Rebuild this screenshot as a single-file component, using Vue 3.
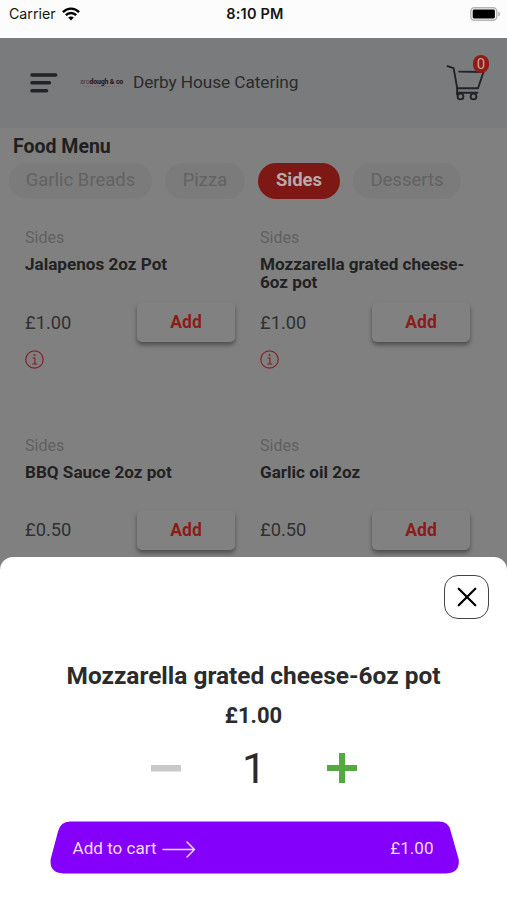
<script setup>
const categories = [
  { name: 'Garlic Breads', width: 143 },
  { name: 'Pizza', width: 80 },
  { name: 'Sides', width: 82, active: true },
  { name: 'Desserts', width: 108 },
]
const items = [
  { name: 'Jalapenos 2oz Pot', price: '£1.00', info: true },
  { name: 'Mozzarella grated cheese-6oz pot', price: '£1.00', info: true },
  { name: 'BBQ Sauce 2oz pot', price: '£0.50' },
  { name: 'Garlic oil 2oz', price: '£0.50' },
]
</script>

<template>
  <div class="screen">
    <div class="status">
      <div class="carrier">
        <span>Carrier</span>
        <svg width="18" height="14" viewBox="0 0 18 14" fill="none" stroke="#000" stroke-width="2.4">
          <path d="M.9 5.1C5.6.4 12.4.4 17.1 5.1" />
          <path d="M3.8 8.2c3-2.9 7.4-2.9 10.4 0" />
          <path d="M6.2 10.6c1.6-1.6 4-1.6 5.6 0L9 13.6z" fill="#000" stroke="none" />
        </svg>
      </div>
      <span class="time">8:10 PM</span>
      <svg class="battery" width="31" height="14" viewBox="0 0 31 14">
        <rect x=".8" y=".8" width="26" height="12.4" rx="3.6" fill="#fafafa" stroke="#b5b5b5" stroke-width="1.4" />
        <rect x="2.7" y="2.6" width="22.2" height="8.8" rx="1.4" fill="#000" />
        <path d="M28.2 4.7c2.6.8 2.6 3.8 0 4.6z" fill="#b5b5b5" />
      </svg>
    </div>

    <header class="header">
      <svg class="burger" width="28" height="20" viewBox="0 0 28 20" stroke="#222326" stroke-width="3.4" stroke-linecap="round">
        <path d="M1.9 2h23.800M1.900 9.800h17.500M1.900 17.800h14.700" />
      </svg>
      <div class="logo">
        <div class="logo-name"><span>aro</span><b>dough &amp; co</b></div>
        <div class="logo-line"></div>
      </div>
      <span class="shop">Derby House Catering</span>
      <div class="cart">
        <svg width="40" height="38" viewBox="0 0 40 38" fill="none" stroke="#222326" stroke-width="1.9" stroke-linecap="round" stroke-linejoin="round">
          <path d="M1.500 2.200l6.100 2L11.200 24.200l-.1 3.300v3" />
          <path d="M13.200 7.600l24.300.4-5.500 16.200H11.200M11.200 28.800h20.300" />
          <circle cx="14.500" cy="32.500" r="2.900" /><circle cx="27.500" cy="32.500" r="2.900" />
        </svg>
        <span class="badge">0</span>
      </div>
    </header>

    <main class="menu">
      <h1>Food Menu</h1>
      <nav class="tabs">
        <span v-for="c in categories" :key="c.name" class="tab" :class="{ active: c.active }" :style="{ width: c.width + 'px' }">{{ c.name }}</span>
      </nav>
      <section class="grid">
        <article v-for="item in items" :key="item.name" class="item">
          <span class="kind">Sides</span>
          <h2>{{ item.name }}</h2>
          <div class="buy">
            <span class="price">{{ item.price }}</span>
            <button class="add">Add</button>
          </div>
          <svg v-if="item.info" class="info" width="19" height="19" viewBox="0 0 19 19" fill="none" stroke="#891f25" stroke-width="1.2">
            <circle cx="9.500" cy="9.500" r="8.700" />
            <path d="M7.500 8h2.400v6M7.200 14h5" />
            <circle cx="9.500" cy="5" r=".8" fill="#891f25" stroke-width=".5" />
          </svg>
        </article>
      </section>
    </main>

    <div class="sheet">
      <button class="close">
        <svg width="20" height="20" viewBox="0 0 20 20" stroke="#000" stroke-width="2.200" stroke-linecap="round">
          <path d="M1.700 1.700l16.600 16.600M18.300 1.700L1.700 18.300" />
        </svg>
      </button>
      <h3>Mozzarella grated cheese-6oz pot</h3>
      <div class="sheet-price">£1.00</div>
      <div class="stepper">
        <svg width="30" height="30" viewBox="0 0 30 30"><path d="M0 12h30v6.500H0z" fill="#c9c9ca" /></svg>
        <span class="count">1</span>
        <svg width="30" height="30" viewBox="0 0 30 30"><path d="M12 0h6v12h12v6H18v12h-6V18H0v-6h12z" fill="#55a942" /></svg>
      </div>
      <div class="checkout">
        <svg class="shape" width="410" height="53" viewBox="0 0 410 53">
          <path d="M20 .5H389Q398.500.5 400.500 9.500L408.600 38Q410.500 51.500 396.500 52.500H13Q-1 51.500.7 38L8 10.500Q10.500.5 20 .5Z" fill="#8500fb" />
        </svg>
        <div class="checkout-row">
          <span>Add to cart</span>
          <svg class="arrow" width="34" height="17" viewBox="0 0 34 17" fill="none" stroke="#f3d9ff" stroke-width="1.500" stroke-linecap="round" stroke-linejoin="round">
            <path d="M1 8.500h31.500M25 1l7.500 7.500L25 16" />
          </svg>
          <span class="total">£1.00</span>
        </div>
      </div>
    </div>
  </div>
</template>

<style>
body { margin: 0; background: #808080; }
</style>

<style scoped>
.screen { position: relative; width: 507px; height: 900px; overflow: hidden; background: #808080; font-family: Roboto, sans-serif; color: #252526; }
h1, h2, h3 { margin: 0; font-weight: 700; }
button { font-family: inherit; padding: 0; border: 0; }
svg { display: block; flex: none; }
.status { box-sizing: border-box; height: 38px; padding: 0 6px 11px 9px; display: grid; grid-template-columns: 1fr auto 1fr; align-items: center; background: #fcfcfc; font-family: Inter, sans-serif; color: #151515; }
.carrier { display: flex; align-items: center; gap: 6px; font-size: 14.200px; }
.time { font-size: 14.500px; font-weight: 600; letter-spacing: .2px; }
.battery { justify-self: end; }
.header { box-sizing: border-box; height: 90px; padding: 0 15px 2px 30px; display: flex; align-items: center; background: #797b7d; }
.burger { margin-top: 2px; }
.logo { width: 45px; margin-left: 22px; }
.logo-name { margin-top: 1px; font-size: 7px; line-height: 8px; font-weight: 700; white-space: nowrap; color: #301f21; letter-spacing: -.2px; }
.logo-name span { font-weight: 400; color: #493e40; }
.logo-name b { font-weight: 900; }
.logo-line { width: 35px; margin-left: 4px; border-top: 1px dotted #706668; }
.shop { margin-left: 8px; font-size: 17.300px; letter-spacing: -.1px; color: #2b2b2c; }
.cart { position: relative; margin: 2px 0 0 auto; width: 46px; height: 38px; }
.badge { position: absolute; left: 27px; top: -9px; width: 16px; height: 18px; border-radius: 8px; background: #911b17; color: #c4a19f; font-size: 15px; line-height: 18px; text-align: center; }
.menu { padding-top: 6px; }
h1 { padding-left: 13px; font-size: 19.500px; line-height: 25px; color: #202020; }
.tabs { display: flex; gap: 13px; padding: 4px 0 0 9px; }
.tab { box-sizing: border-box; height: 36px; padding-bottom: 1px; display: flex; align-items: center; justify-content: center; border-radius: 18px; background: #7b7b7b; color: #626262; font-size: 18.500px; line-height: 21px; }
.active { background: #7d1815; color: #b7aaa8; font-weight: 700; }
.grid { display: grid; grid-template-columns: 210px 210px; column-gap: 25px; grid-auto-rows: 207.500px; padding: 28px 25px 0; }
.item { display: flex; flex-direction: column; }
.kind { font-size: 16px; line-height: 21px; color: #606060; }
h2 { height: 36px; margin-top: 7px; font-size: 17.100px; line-height: 18px; color: #222; }
.buy { display: flex; align-items: center; justify-content: space-between; margin-top: 11px; height: 40px; }
.price { font-size: 18.300px; color: #303030; }
.add { width: 98px; height: 40px; border-radius: 5px; background: #818181; color: #8c1c17; font-size: 17.500px; font-weight: 700; box-shadow: 0 3px 4px rgba(0, 0, 0, .4); }
.info { margin-top: 8px; }
.sheet { position: absolute; left: 0; top: 557px; box-sizing: border-box; width: 507px; height: 343px; padding-top: 18px; border-radius: 13px 13px 0 0; background: #fff; display: flex; flex-direction: column; align-items: center; }
.close { box-sizing: border-box; align-self: flex-end; margin-right: 18px; width: 45px; height: 44px; border: 1.500px solid #444; border-radius: 14px; background: #fff; display: flex; align-items: center; justify-content: center; }
h3 { margin-top: 42px; font-size: 24.450px; line-height: 30px; color: #2b2b2c; }
.sheet-price { margin-top: 11px; font-size: 22px; line-height: 28px; font-weight: 700; color: #2b2b2c; }
.stepper { display: flex; align-items: center; justify-content: space-between; width: 206px; height: 50px; margin: 13px 0 0 1px; }
.count { font-size: 43px; line-height: 50px; color: #2b2b2c; }
.checkout { display: grid; width: 410px; height: 53px; margin: 28px 0 0 2px; }
.shape, .checkout-row { grid-area: 1 / 1; }
.checkout-row { display: flex; align-items: center; padding: 0 26px 0 23px; color: #f3d9ff; font-size: 17.100px; }
.arrow { margin: 4px 0 0 5px; }
.total { margin-left: auto; }
</style>
